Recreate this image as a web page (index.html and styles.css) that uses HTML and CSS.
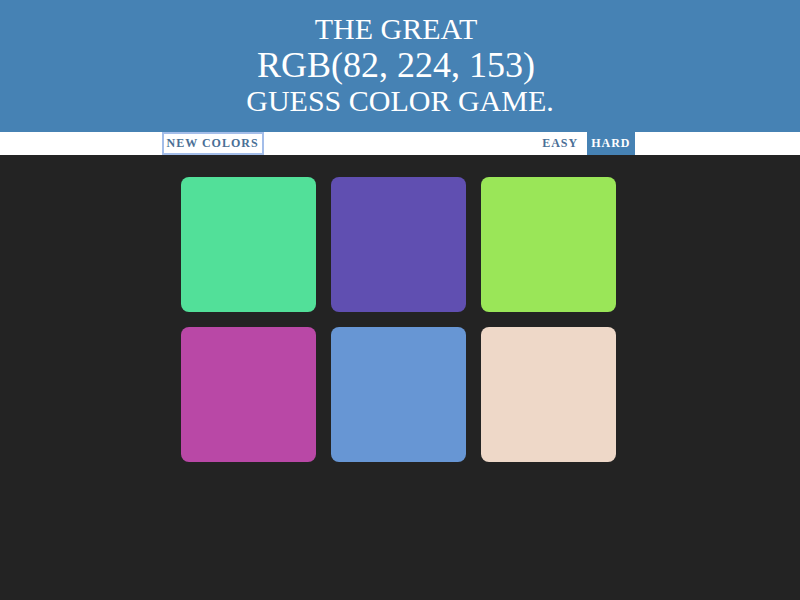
FILE: index.html
```html
<!DOCTYPE html>
<html>
<head>
<meta charset="utf-8">
<link rel="stylesheet" href="styles.css">
</head>
<body>
<header class="header">
  <h1 class="title">
    <span class="line small shift">THE GREAT</span>
    <span class="line big shift">RGB(82, 224, 153)</span>
    <span class="line small">GUESS COLOR GAME.</span>
  </h1>
</header>
<div class="stripe">
  <div class="stripe-inner">
    <button class="btn btn-new">New Colors</button>
    <div class="modes">
      <button class="btn">Easy</button>
      <button class="btn selected">Hard</button>
    </div>
  </div>
</div>
<main class="board">
  <div class="square sq1"></div>
  <div class="square sq2"></div>
  <div class="square sq3"></div>
  <div class="square sq4"></div>
  <div class="square sq5"></div>
  <div class="square sq6"></div>
</main>
</body>
</html>
```
FILE: styles.css
```css
html, body {
  margin: 0;
  padding: 0;
  height: 100%;
}
body {
  background: #232323;
  font-family: "Liberation Serif", "Times New Roman", serif;
}
.header {
  background: #4682b4;
  height: 132px;
  box-sizing: border-box;
  padding-top: 12px;
  display: flex;
  justify-content: center;
}
.title {
  margin: 0;
  color: #ffffff;
  font-weight: normal;
  text-align: center;
  display: flex;
  flex-direction: column;
}
.line.small {
  font-size: 30px;
  line-height: 34px;
}
.line.big {
  font-size: 36px;
  line-height: 38px;
}
.line.shift {
  padding-right: 8px;
}
.stripe {
  background: #ffffff;
  height: 23px;
}
.stripe-inner {
  width: 473px;
  margin: 0 auto;
  height: 100%;
  display: flex;
  justify-content: space-between;
  transform: translateX(-2px);
}
.btn {
  border: none;
  background: none;
  text-transform: uppercase;
  white-space: nowrap;
  height: 100%;
  font-family: "Liberation Serif", "Times New Roman", serif;
  font-weight: 700;
  font-size: 12px;
  color: #4a6f96;
  letter-spacing: 1px;
  padding: 0 4px;
  margin: 0;
}
.btn-new {
  border: 2px solid #a3bde9;
  padding: 0 3px;
}
.modes {
  display: flex;
  gap: 5px;
  height: 100%;
}
.btn.selected {
  background: #4682b4;
  color: #ffffff;
}
.board {
  width: 439px;
  margin: 22px auto 0;
  display: grid;
  grid-template-columns: repeat(3, 135px);
  gap: 15px;
}
.square {
  width: 135px;
  height: 135px;
  border-radius: 8px;
}
.sq1 { background: rgb(82, 224, 153); }
.sq2 { background: rgb(96, 79, 177); }
.sq3 { background: rgb(154, 230, 88); }
.sq4 { background: rgb(185, 72, 166); }
.sq5 { background: rgb(103, 150, 212); }
.sq6 { background: rgb(238, 216, 200); }
```
